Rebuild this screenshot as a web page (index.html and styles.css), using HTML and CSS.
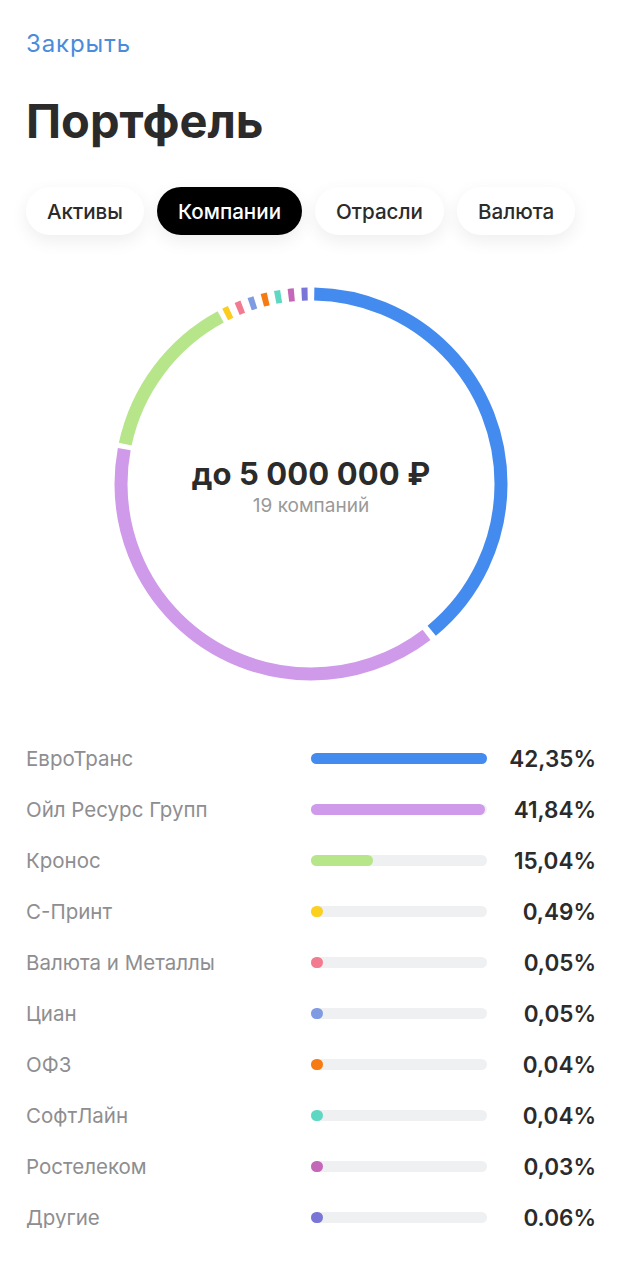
FILE: index.html
```html
<!DOCTYPE html>
<html lang="ru">
<head>
<meta charset="utf-8">
<title>Портфель</title>
<link rel="stylesheet" href="styles.css">
</head>
<body>
<div class="page">
  <a class="close">Закрыть</a>
  <h1 class="title">Портфель</h1>
  <div class="tabs">
    <span class="tab">Активы</span>
    <span class="tab active">Компании</span>
    <span class="tab">Отрасли</span>
    <span class="tab">Валюта</span>
  </div>
  <div class="chart">
    <svg class="ring" width="400" height="400" viewBox="0 0 400 400">
      <g transform="rotate(-90 200 200)" fill="none" stroke-width="13">
        <circle cx="200" cy="200" r="190" stroke="#448bf0" stroke-dasharray="462.6 1193.8" stroke-dashoffset="-3.3"/>
        <circle cx="200" cy="200" r="190" stroke="#cf9ae9" stroke-dasharray="457.6 1193.8" stroke-dashoffset="-472.5"/>
        <circle cx="200" cy="200" r="190" stroke="#b7e58a" stroke-dasharray="164.1 1193.8" stroke-dashoffset="-935.1"/>
        <circle cx="200" cy="200" r="190" stroke="#fbcd1f" stroke-dasharray="6 1193.8" stroke-dashoffset="-1104.3"/>
        <circle cx="200" cy="200" r="190" stroke="#f27b8f" stroke-dasharray="6 1193.8" stroke-dashoffset="-1117.5"/>
        <circle cx="200" cy="200" r="190" stroke="#7f9be2" stroke-dasharray="6 1193.8" stroke-dashoffset="-1130.8"/>
        <circle cx="200" cy="200" r="190" stroke="#f57b12" stroke-dasharray="6 1193.8" stroke-dashoffset="-1144.1"/>
        <circle cx="200" cy="200" r="190" stroke="#5fd8c3" stroke-dasharray="6 1193.8" stroke-dashoffset="-1157.3"/>
        <circle cx="200" cy="200" r="190" stroke="#c467b9" stroke-dasharray="6 1193.8" stroke-dashoffset="-1170.6"/>
        <circle cx="200" cy="200" r="190" stroke="#7a76d7" stroke-dasharray="6 1193.8" stroke-dashoffset="-1183.9"/>
      </g>
    </svg>
    <div class="center">
      <div class="total">до 5 000 000 ₽</div>
      <div class="count">19 компаний</div>
    </div>
  </div>
  <div class="list">
    <div class="row"><span class="name">ЕвроТранс</span><span class="track"><span class="fill c1" style="width:100%"></span></span><span class="pct">42,35%</span></div>
    <div class="row"><span class="name">Ойл Ресурс Групп</span><span class="track"><span class="fill c2" style="width:98.8%"></span></span><span class="pct">41,84%</span></div>
    <div class="row"><span class="name">Кронос</span><span class="track"><span class="fill c3" style="width:35.5%"></span></span><span class="pct">15,04%</span></div>
    <div class="row"><span class="name">С-Принт</span><span class="track"><span class="fill c4" style="width:1.2%"></span></span><span class="pct">0,49%</span></div>
    <div class="row"><span class="name">Валюта и Металлы</span><span class="track"><span class="fill c5" style="width:0.1%"></span></span><span class="pct">0,05%</span></div>
    <div class="row"><span class="name">Циан</span><span class="track"><span class="fill c6" style="width:0.1%"></span></span><span class="pct">0,05%</span></div>
    <div class="row"><span class="name">ОФЗ</span><span class="track"><span class="fill c7" style="width:0.1%"></span></span><span class="pct">0,04%</span></div>
    <div class="row"><span class="name">СофтЛайн</span><span class="track"><span class="fill c8" style="width:0.1%"></span></span><span class="pct">0,04%</span></div>
    <div class="row"><span class="name">Ростелеком</span><span class="track"><span class="fill c9" style="width:0.1%"></span></span><span class="pct">0,03%</span></div>
    <div class="row"><span class="name">Другие</span><span class="track"><span class="fill c10" style="width:0.1%"></span></span><span class="pct">0.06%</span></div>
  </div>
</div>
</body>
</html>
```
FILE: styles.css
```css
* { box-sizing: border-box; }
html, body { margin: 0; padding: 0; background: #fff; }
body {
  font-family: Inter, "Noto Sans", "Liberation Sans", sans-serif;
  color: #2b2b2b;
}
.page {
  width: 622px;
  padding: 30px 26px 0;
}
.close {
  display: block;
  font-size: 24px;
  line-height: 28px;
  color: #4a8bdc;
  letter-spacing: 0.9px;
}
.title {
  margin: 38px 0 0;
  font-size: 47px;
  line-height: 50px;
  font-weight: 700;
  color: #2b2b2b;
}
.tabs {
  display: flex;
  gap: 13px;
  margin-top: 41px;
}
.tab {
  height: 48px;
  padding: 0 21px;
  display: flex;
  align-items: center;
  border-radius: 24px;
  background: #fff;
  box-shadow: 0 6px 18px rgba(0, 0, 0, 0.07);
  font-size: 20.6px;
  font-weight: 500;
  color: #2b2b2b;
}
.tab.active {
  background: #000;
  color: #fff;
}
.chart {
  position: relative;
  width: 400px;
  height: 400px;
  margin: 49px auto 0;
}
.ring { display: block; }
.center {
  position: absolute;
  left: 0;
  right: 0;
  top: 171px;
  text-align: center;
}
.total {
  font-size: 31px;
  line-height: 38px;
  font-weight: 700;
  color: #2b2b2b;
  letter-spacing: 0.1px;
}
.count {
  font-size: 19px;
  line-height: 24px;
  color: #999;
  margin-top: 1px;
}
.list {
  margin-top: 49px;
  height: 495px;
  overflow: hidden;
}
.row {
  display: grid;
  grid-template-columns: 285px 176px 109px;
  align-items: center;
  height: 51px;
}
.name {
  font-size: 20.5px;
  color: #8e8e91;
}
.track {
  display: block;
  height: 11px;
  border-radius: 6px;
  background: #eef0f1;
}
.fill {
  display: block;
  height: 11px;
  min-width: 12px;
  border-radius: 6px;
}
.pct {
  text-align: right;
  font-size: 22.5px;
  font-weight: 600;
  color: #2b2b2b;
}
.c1 { background: #448bf0; }
.c2 { background: #cf9ae9; }
.c3 { background: #b7e58a; }
.c4 { background: #fbd01f; }
.c5 { background: #f27b8f; }
.c6 { background: #7f9be2; }
.c7 { background: #f57b12; }
.c8 { background: #5fd8c3; }
.c9 { background: #c467b9; }
.c10 { background: #7a76d7; }
```
